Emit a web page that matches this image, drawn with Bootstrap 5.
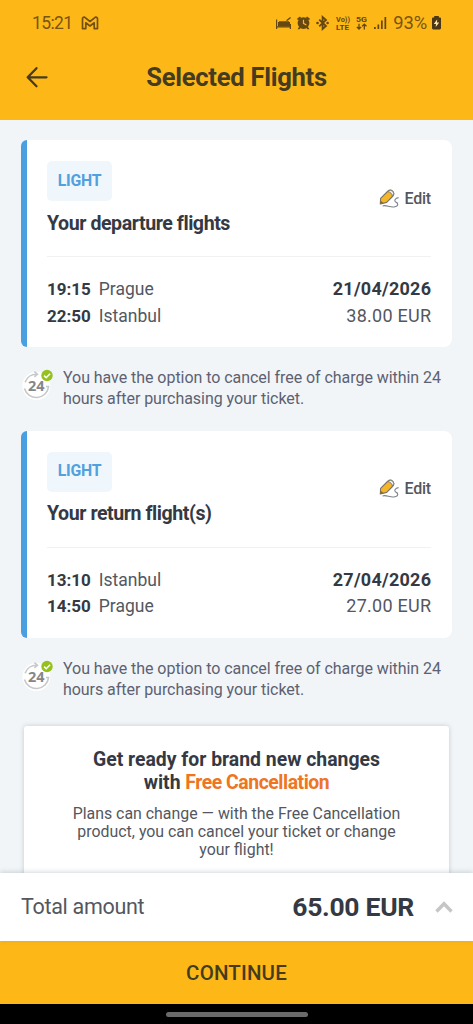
<!DOCTYPE html>
<html lang="en">
<head>
<meta charset="utf-8">
<meta name="viewport" content="width=device-width, initial-scale=1">
<title>Selected Flights</title>
<link href="https://cdn.jsdelivr.net/npm/bootstrap@5.3.0/dist/css/bootstrap.min.css" rel="stylesheet">
<style>
  :root { --sun: #fdb817; --ink: #343943; --slate: #53575f; --brown: #453b20; }
  body { font-family: Roboto, "Liberation Sans", sans-serif; color: var(--slate); background: #f1f5f8; height: 1024px; line-height: 1.2; }
  svg { display: block; flex-shrink: 0; }
  .phone-screen { height: 1024px; }
  .top-area { background: var(--sun); height: 119.5px; color: var(--brown); }
  .status-bar { height: 46px; padding: 0 31px 0 32px; color: #7a5410; font-size: 17.5px; }
  .clock-text { letter-spacing: -.6px; }
  .battery-text { font-size: 18.4px; letter-spacing: -.1px; }
  .title-bar { height: 63px; }
  .title-bar h1 { font-size: 25.6px; font-weight: 700; letter-spacing: -.28px; }
  .back-btn { left: 26px; top: 20px; color: var(--brown); }
  .scroll-area { padding: 20.5px 21px 0; min-height: 0; }
  .flight-card { height: 207px; border: 0; border-left: 6px solid #4a9fe0; border-radius: 6px 8px 8px 6px; padding: 21px 21px 0 20px; background: #fff; color: inherit; }
  .fare-tag { background: #eff6fc; color: #50a1de; font-size: 15.8px; font-weight: 700; border-radius: 5px; width: 65px; height: 40px; letter-spacing: -.25px; }
  .flight-card h2 { font-size: 19.6px; font-weight: 700; color: var(--ink); letter-spacing: -.44px; line-height: 24px; margin-top: 10.5px; }
  .edit-link { font-size: 16px; font-weight: 500; color: var(--slate); margin-top: 27.5px; height: 20px; gap: 4px; letter-spacing: -.2px; }
  .divider { height: 1px; background: #f0f1f2; margin-top: 20.5px; margin-bottom: 19px; }
  .leg { font-size: 17.5px; line-height: 26.6px; }
  .leg b { color: var(--ink); }
  .leg-place b { font-size: 17px; }
  .leg-value { font-size: 18px; letter-spacing: .25px; margin-right: -.25px; }
  .note { height: 83.5px; padding-top: 20px; font-size: 16px; line-height: 21px; color: #5d6172; }
  .note svg { margin-top: 2px; }
  .note p { margin-left: 10px; white-space: nowrap; letter-spacing: -.05px; }
  .promo { margin: 4.5px 3px 0; height: 220px; background: #fff; border-radius: 3px; box-shadow: 0 0 5px rgba(50,60,80,.22); padding-top: 22px; }
  .promo h3 { font-size: 19.4px; line-height: 23.5px; font-weight: 700; color: var(--ink); margin-bottom: 10px; }
  .promo h3 span { color: #ee7522; letter-spacing: -.46px; }
  .promo p { font-size: 15.9px; line-height: 18.4px; }
  .total-bar { height: 68px; background: #fff; box-shadow: 0 -1px 5px rgba(50,60,80,.2); padding: 0 20px 0 21px; font-size: 21.5px; letter-spacing: -.3px; z-index: 1; }
  .total-bar strong { font-size: 26.5px; color: var(--ink); }
  .total-bar svg { margin-left: 21px; }
  .continue-btn { height: 63px; background: var(--sun); color: var(--brown); border-radius: 0; font-size: 20.5px; font-weight: 500; letter-spacing: .15px; padding-top: 8px; }
  .nav-strip { height: 20px; background: #000; }
  .nav-strip div { width: 142px; height: 5px; background: #6a6a6a; border-radius: 3px; }
</style>
</head>
<body>
<svg width="0" height="0" class="position-absolute" aria-hidden="true">
  <symbol id="pencil" viewBox="0 0 22 20">
    <path d="M2.3 15 2.6 9.4 9.5 2.5Q12.3 0 14.8 2.3 16.8 4.6 15 7L8.7 13.4Z" fill="#f4b72a" stroke="#77736c" stroke-width="1.1" stroke-linejoin="round"/>
    <path d="M9.5 2.5Q12.3 0 14.8 2.3 16.8 4.6 14.4 7.4 14.2 3.4 9.5 2.5Z" fill="#f5f5f5" stroke="#77736c" stroke-width=".9"/>
    <path d="M2.3 15 2.5 11.5 5.8 14.2Z" fill="#8b6b25"/>
    <path d="M4.6 16.9C8.5 15.6 11.5 18.6 16 18 21.4 17.3 20 13.7 17.8 13.1 15.7 12 17.2 9 20.6 8.6" fill="none" stroke="#7c828a" stroke-width="1.1"/>
  </symbol>
  <symbol id="refund-ring" viewBox="0 0 32 32">
    <circle cx="15.4" cy="17" r="14" fill="#fff"/>
    <g fill="none" stroke="#c7c8ca" stroke-width="1.6">
      <path d="M4.1 13.2A12 12 0 0 1 15.5 5.2"/>
      <path d="M13.4 2.6 16.4 5.2 13.4 7.8"/>
      <path d="M3.5 19.5A12.3 12.3 0 0 0 27.6 17.5H25"/>
    </g>
    <circle cx="26" cy="6.5" r="5.7" fill="#95c11f"/>
    <path d="M23.1 6.6 25.2 8.7 29.1 4.7" fill="none" stroke="#fff" stroke-width="1.5"/>
  </symbol>
</svg>

<div class="phone-screen d-flex flex-column overflow-hidden">
  <header class="top-area flex-shrink-0">
    <div class="status-bar d-flex align-items-center justify-content-between">
      <div class="d-flex align-items-center gap-1">
        <span class="clock-text">15:21</span>
        <svg width="18" height="14" viewBox="0 0 17 14" class="ms-1" fill="none" stroke="#725012" stroke-width="1.7" stroke-linejoin="round"><path d="M1 12.6V3Q1 1 3 1.2L8.5 5.5 14 1.2Q16 1 16 3V12.6H12.7V6.8L8.5 10 4.3 6.8V12.6Z"/></svg>
      </div>
      <div class="d-flex align-items-center">
        <svg width="118" height="20" viewBox="0 0 118 20" fill="#654711">
          <path d="M1 6.5H2.2V13.2H14.8V11H16V16H14.8V14.6H2.2V16H1ZM3.2 10H14.8V12.4H3.2ZM4 8.2H14V9.3H4ZM11 7.2 15.2 4 16 5 12.2 8Z"/>
          <path d="M3 9H15V13.5H3Z"/>
          <path d="M22 5.7 25 3.4 26.2 5 23 7.3ZM35 5.7 32 3.4 30.8 5 34 7.3Z"/>
          <path fill-rule="evenodd" d="M28.5 4.2A5.9 5.9 0 1 1 28.5 16 5.9 5.9 0 0 1 28.5 4.2ZM27.9 6.8V10.7L31.1 12.4 31.7 11.4 29.1 10V6.8Z"/>
          <path d="M24.2 13.5 22.6 16.3H24.4L26 14.8ZM32.8 13.5 34.4 16.3H32.6L31 14.8Z"/>
          <path d="M44.2 6.6 51 13 47.6 16V4L51 7 44.2 13.4" fill="none" stroke="#654711" stroke-width="1.8"/>
          <circle cx="42.5" cy="10" r="1.3"/><circle cx="52.6" cy="10" r="1.3"/>
          <g font-family="Roboto, sans-serif" font-weight="700" font-size="7.2">
            <text x="61" y="8.7" textLength="14" lengthAdjust="spacingAndGlyphs">Vo))</text>
            <text x="61" y="16.6" textLength="13" lengthAdjust="spacingAndGlyphs">LTE</text>
            <text x="81" y="8.7" textLength="11" lengthAdjust="spacingAndGlyphs">5G</text>
          </g>
          <path d="M84 10.7V16M81.8 13.9 84 16 86.2 13.9M89.3 16.4V11.2M87.1 13.3 89.3 11.2 91.5 13.3" fill="none" stroke="#654711" stroke-width="1.3"/>
          <path d="M99 14H100.8V16H99ZM102.5 11.5H104.2V16H102.5ZM106 7.5H107.7V16H106ZM109.5 4H111.2V16H109.5Z"/>
        </svg>
        <span class="battery-text">93%</span>
        <svg width="11" height="14" viewBox="0 0 11 14" class="ms-1"><path d="M3.2 0H7.8V1.5H9Q10 1.5 10 2.5V12Q10 13.4 8.8 13.4H2.2Q1 13.4 1 12V2.5Q1 1.5 2 1.5H3.2Z" fill="#4b3713"/><path d="M6.2 3.3 2.8 8H5L4.7 11 8.2 6.5H6Z" fill="#ffe7ae"/></svg>
      </div>
    </div>
    <div class="title-bar position-relative d-flex align-items-center justify-content-center">
      <a href="#" class="back-btn position-absolute" aria-label="Back">
        <svg width="22" height="22" viewBox="0 0 22 22" fill="none" stroke="currentColor" stroke-width="2.3" stroke-linecap="round" stroke-linejoin="round"><path d="M10.5 2.2 1.7 11.3 10.5 20.3M2 11.3H20.5"/></svg>
      </a>
      <h1 class="m-0">Selected Flights</h1>
    </div>
  </header>

  <main class="scroll-area flex-grow-1 overflow-hidden">
    <section class="flight-card">
      <div class="d-flex justify-content-between align-items-start">
        <div>
          <div class="fare-tag d-flex align-items-center justify-content-center">LIGHT</div>
          <h2 class="mb-0">Your departure flights</h2>
        </div>
        <a href="#" class="edit-link d-flex align-items-center text-decoration-none"><svg width="22" height="20"><use href="#pencil"/></svg>Edit</a>
      </div>
      <div class="divider"></div>
      <div class="leg d-flex justify-content-between"><div class="leg-place d-flex gap-2"><b>19:15</b><span>Prague</span></div><b class="leg-value">21/04/2026</b></div>
      <div class="leg d-flex justify-content-between"><div class="leg-place d-flex gap-2"><b>22:50</b><span>Istanbul</span></div><span class="leg-value">38.00 EUR</span></div>
    </section>
    <div class="note d-flex align-items-start">
      <svg width="32" height="32"><use href="#refund-ring"/><text x="15.2" y="22" text-anchor="middle" font-family="Open Sans, sans-serif" font-weight="700" font-size="14.5" fill="#85868a">24</text></svg>
      <p class="mb-0">You have the option to cancel free of charge within 24<br>hours after purchasing your ticket.</p>
    </div>

    <section class="flight-card">
      <div class="d-flex justify-content-between align-items-start">
        <div>
          <div class="fare-tag d-flex align-items-center justify-content-center">LIGHT</div>
          <h2 class="mb-0">Your return flight(s)</h2>
        </div>
        <a href="#" class="edit-link d-flex align-items-center text-decoration-none"><svg width="22" height="20"><use href="#pencil"/></svg>Edit</a>
      </div>
      <div class="divider"></div>
      <div class="leg d-flex justify-content-between"><div class="leg-place d-flex gap-2"><b>13:10</b><span>Istanbul</span></div><b class="leg-value">27/04/2026</b></div>
      <div class="leg d-flex justify-content-between"><div class="leg-place d-flex gap-2"><b>14:50</b><span>Prague</span></div><span class="leg-value">27.00 EUR</span></div>
    </section>
    <div class="note d-flex align-items-start">
      <svg width="32" height="32"><use href="#refund-ring"/><text x="15.2" y="22" text-anchor="middle" font-family="Open Sans, sans-serif" font-weight="700" font-size="14.5" fill="#85868a">24</text></svg>
      <p class="mb-0">You have the option to cancel free of charge within 24<br>hours after purchasing your ticket.</p>
    </div>

    <section class="promo text-center">
      <h3>Get ready for brand new changes<br>with <span>Free Cancellation</span></h3>
      <p class="mb-0">Plans can change — with the Free Cancellation<br>product, you can cancel your ticket or change<br>your flight!</p>
    </section>
  </main>

  <div class="total-bar flex-shrink-0 d-flex align-items-center">
    <span class="me-auto">Total amount</span>
    <strong>65.00 EUR</strong>
    <svg width="18" height="12" viewBox="0 0 18 12" fill="none" stroke="#c6c6c8" stroke-width="3.4"><path d="M1.5 10.5 9 2.8 16.5 10.5"/></svg>
  </div>
  <button class="continue-btn btn flex-shrink-0 w-100">CONTINUE</button>
  <div class="nav-strip flex-shrink-0 d-flex align-items-center justify-content-center"><div></div></div>
</div>
<script src="https://cdn.jsdelivr.net/npm/bootstrap@5.3.0/dist/js/bootstrap.bundle.min.js"></script>
</body>
</html>
